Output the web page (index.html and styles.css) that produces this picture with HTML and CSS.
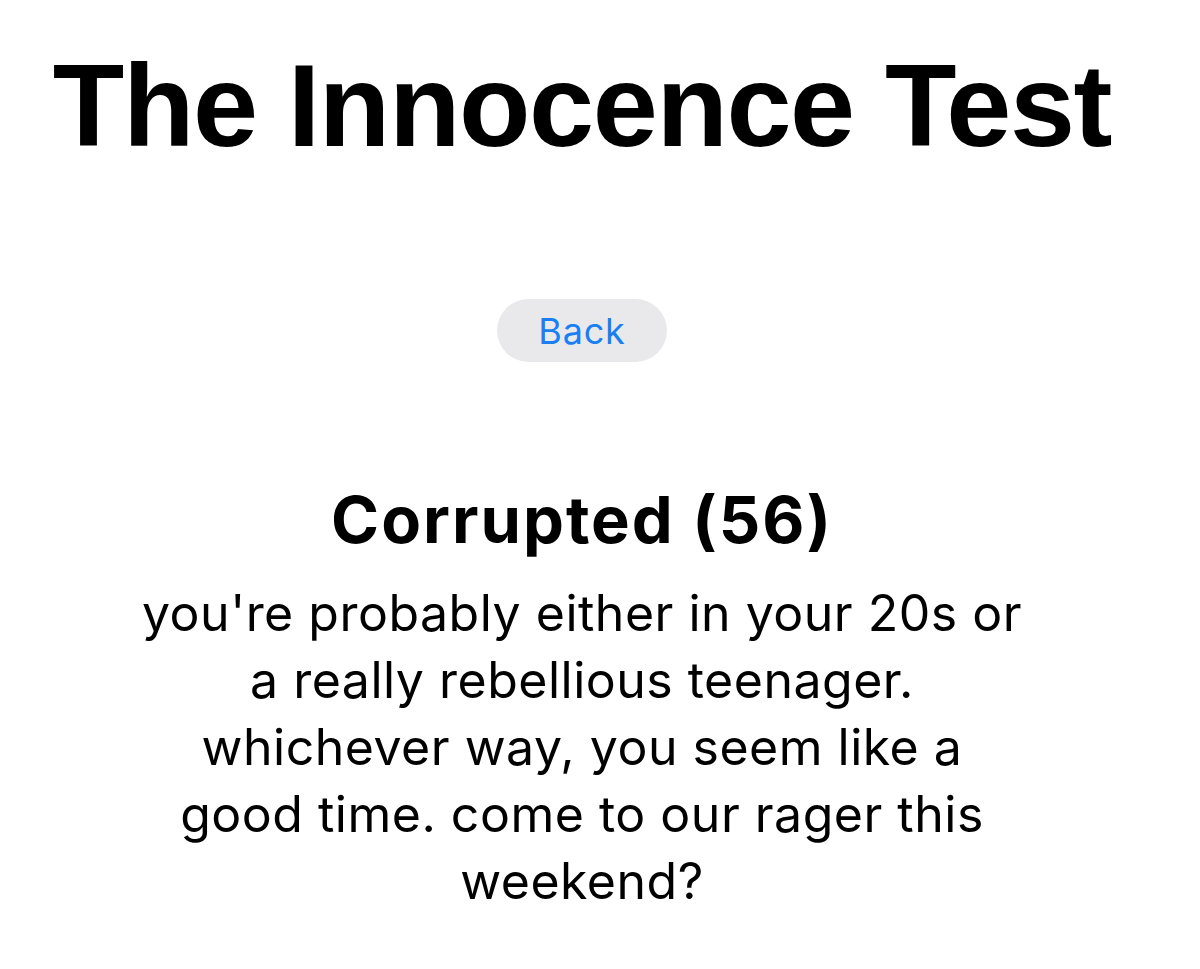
FILE: index.html
```html
<!DOCTYPE html>
<html lang="en">
<head>
<meta charset="utf-8">
<title>The Innocence Test</title>
<link rel="stylesheet" href="styles.css">
</head>
<body>
<main class="page">
  <h1 class="title">The Innocence Test</h1>
  <button class="back-btn" type="button">Back</button>
  <section class="result">
    <h2 class="result-title">Corrupted (56)</h2>
    <p class="result-text">you're probably either in your 20s or a really rebellious teenager. whichever way, you seem like a good time. come to our rager this weekend?</p>
  </section>
</main>
</body>
</html>
```
FILE: styles.css
```css
html, body {
  margin: 0;
  padding: 0;
  background: #ffffff;
}

body {
  font-family: Inter, "Liberation Sans", sans-serif;
  color: #000;
}

.page {
  display: flex;
  flex-direction: column;
  align-items: center;
  text-align: center;
  padding-right: 36px;
}

.title {
  margin: 47px 0 0;
  font-family: "Liberation Sans", Arial, sans-serif;
  font-weight: 700;
  font-size: 117px;
  line-height: 117px;
  letter-spacing: -1.4px;
  white-space: nowrap;
}

.back-btn {
  margin-top: 135px;
  width: 170px;
  height: 63px;
  border: none;
  border-radius: 32px;
  background: #e9e9eb;
  color: #1b7ff0;
  font-family: Inter, "Liberation Sans", sans-serif;
  font-size: 36px;
  letter-spacing: 0.8px;
  font-weight: 400;
  padding: 0;
}

.result {
  margin-top: 120px;
  display: flex;
  flex-direction: column;
  align-items: center;
}

.result-title {
  margin: 0;
  font-size: 65px;
  line-height: 76px;
  letter-spacing: 2px;
  font-weight: 700;
}

.result-text {
  margin: 22px 0 0;
  max-width: 886px;
  font-size: 50px;
  line-height: 67px;
  letter-spacing: 0.5px;
  font-weight: 400;
}
```
